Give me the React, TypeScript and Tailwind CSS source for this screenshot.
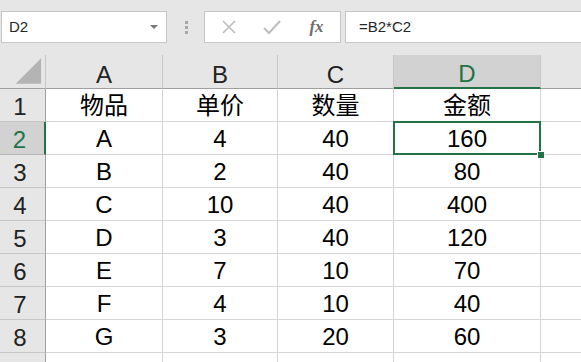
import React from "react"

const cols = [
  { key: "A", w: "w-[117px]" },
  { key: "B", w: "w-[115px]" },
  { key: "C", w: "w-[116px]" },
  { key: "D", w: "w-[147px]" },
]

const rows = [
  ["物品", "单价", "数量", "金额"],
  ["A", "4", "40", "160"],
  ["B", "2", "40", "80"],
  ["C", "10", "40", "400"],
  ["D", "3", "40", "120"],
  ["E", "7", "10", "70"],
  ["F", "4", "10", "40"],
  ["G", "3", "20", "60"],
  ["", "", "", ""],
]

const cellFont = { fontFamily: '"Liberation Sans", "Noto Sans CJK SC", sans-serif' }

function TopBar() {
  return (
    <div className="h-[55px] bg-[#e6e6e6] flex items-start pt-[11px] pl-[1px] shrink-0">
      <div className="w-[166px] h-[32px] bg-white border border-[#c6c6c6] flex items-center justify-between pl-[7px] pr-[8px]">
        <span className="text-[15px] text-[#262626]" style={{ fontFamily: '"Liberation Sans", sans-serif' }}>D2</span>
        <svg width="8" height="5" viewBox="0 0 8 5">
          <path d="M0 0 L8 0 L4 4 Z" fill="#777" />
        </svg>
      </div>
      <div className="w-[37px] h-[32px] flex flex-col items-center justify-center gap-[2px] pl-[2px]">
        <div className="w-[3px] h-[3px] bg-[#a6a6a6]" />
        <div className="w-[3px] h-[3px] bg-[#a6a6a6]" />
        <div className="w-[3px] h-[3px] bg-[#a6a6a6]" />
      </div>
      <div className="w-[137px] h-[32px] bg-white border border-[#c6c6c6] flex items-center">
        <div className="w-[44px] flex justify-center pl-[4px]">
          <svg width="16" height="16" viewBox="0 0 16 16">
            <path d="M2 2 L14 14 M14 2 L2 14" stroke="#bdbdbd" strokeWidth="1.6" fill="none" />
          </svg>
        </div>
        <div className="w-[44px] flex justify-center pl-[2px]">
          <svg width="18" height="16" viewBox="0 0 18 16">
            <path d="M1 9 L6 14 L17 2" stroke="#bdbdbd" strokeWidth="2" fill="none" />
          </svg>
        </div>
        <div className="flex-1 flex justify-center">
          <span className="italic font-bold text-[17px] text-[#6e6e6e]" style={{ fontFamily: '"Liberation Serif", serif' }}>fx</span>
        </div>
      </div>
      <div className="flex-1 ml-[4px] h-[32px] bg-white border-y border-l border-[#c6c6c6] flex items-center pl-[13px]">
        <span className="text-[15px] text-[#262626]" style={{ fontFamily: '"Liberation Sans", sans-serif' }}>=B2*C2</span>
      </div>
    </div>
  )
}

function HeaderRow() {
  return (
    <div className="flex h-[34px] bg-[#e6e6e6]">
      <div className="w-[46px] shrink-0 border-r border-b border-r-[#c6c6c6] border-b-[#9f9f9f] flex items-center justify-center">
        <svg width="46" height="33" viewBox="0 0 46 33">
          <path d="M42 3 L42 29 L16 29 Z" fill="#b4b4b4" />
        </svg>
      </div>
      {cols.map((c) => {
        const sel = c.key === "D"
        return (
          <div
            key={c.key}
            className={`${c.w} shrink-0 border-r border-r-[#c6c6c6] flex items-center justify-center pt-[6px] text-[24px] ${
              sel ? "bg-[#d2d2d2] border-b-2 border-b-[#217346] text-[#217346]" : "border-b border-b-[#9f9f9f] text-[#222]"
            }`}
            style={cellFont}
          >
            {c.key}
          </div>
        )
      })}
      <div className="flex-1 border-b border-b-[#9f9f9f]" />
    </div>
  )
}

export default function App() {
  return (
    <div className="w-[581px] h-[362px] overflow-hidden bg-white flex flex-col">
      <TopBar />
      <HeaderRow />
      {rows.map((r, i) => {
        const n = i + 1
        const selRow = n === 2
        return (
          <div key={n} className="flex h-[33px] shrink-0">
            <div
              className={`w-[46px] shrink-0 border-b border-r flex items-center justify-center pr-[5px] pt-[3px] text-[24px] ${
                selRow
                  ? "bg-[#d2d2d2] text-[#217346] border-r-2 border-r-[#217346] border-b-[#b4b4b4]"
                  : "bg-[#e6e6e6] text-[#222] border-r-[#9f9f9f] border-b-[#c6c6c6]"
              }`}
              style={cellFont}
            >
              {n}
            </div>
            {cols.map((c, j) => (
              <div
                key={c.key}
                className={`${c.w} shrink-0 relative border-r border-b border-[#d4d4d4] flex items-center justify-center pt-[2px] text-[24px] text-black`}
                style={cellFont}
              >
                {r[j]}
                {selRow && c.key === "D" && (
                  <>
                    <div className="absolute z-10 -left-[1px] -top-[1px] -right-[1px] -bottom-[1px] border-2 border-[#217346]" />
                    <div className="absolute z-10 -right-[5px] -bottom-[5px] w-[8px] h-[8px] bg-[#217346] border border-white" />
                  </>
                )}
              </div>
            ))}
            <div className="flex-1 border-b border-[#d4d4d4]" />
          </div>
        )
      })}
    </div>
  )
}
